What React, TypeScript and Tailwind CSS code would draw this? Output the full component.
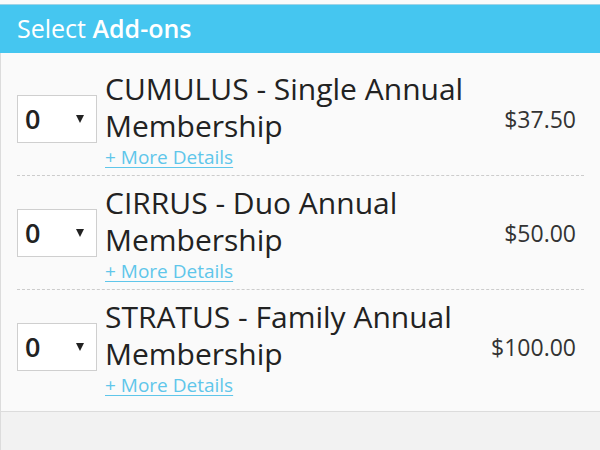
import React, { useState } from 'react';

interface AddOn {
  id: string;
  name: string;
  price: string;
}

const addOns: AddOn[] = [
  { id: 'cumulus', name: 'CUMULUS - Single Annual Membership', price: '$37.50' },
  { id: 'cirrus', name: 'CIRRUS - Duo Annual Membership', price: '$50.00' },
  { id: 'stratus', name: 'STRATUS - Family Annual Membership', price: '$100.00' },
];

const QtySelect: React.FC<{ value: number; onChange: (v: number) => void }> = ({ value, onChange }) => (
  <div className="relative w-[80px] h-[48px] shrink-0 bg-white border border-[#cfcfcf]">
    <select
      value={value}
      onChange={(e) => onChange(Number(e.target.value))}
      className="appearance-none w-full h-full bg-transparent pl-[7px] text-[27px] font-semibold text-[#222] outline-none"
    >
      {[0, 1, 2, 3, 4, 5].map((n) => (
        <option key={n} value={n}>{n}</option>
      ))}
    </select>
    <span className="pointer-events-none absolute right-[12px] top-[19px] w-0 h-0 border-l-[4px] border-r-[4px] border-t-[8px] border-l-transparent border-r-transparent border-t-[#222]"></span>
  </div>
);

export default function App() {
  const [qty, setQty] = useState<Record<string, number>>({});

  return (
    <div className="w-[600px] h-[450px] overflow-hidden bg-[#f2f2f2] font-['Open_Sans',sans-serif]">
      <div className="h-[5px] bg-[#fafafa] border-b border-[#9fd3e6]"></div>
      <div className="h-[48px] bg-[#45c6f0] flex items-center px-[17px] text-white text-[25px]">
        <span>Select&nbsp;</span>
        <span className="font-semibold">Add-ons</span>
      </div>

      <div className="bg-[#fafafa] border-l border-[#dcdcdc] border-b border-b-[#dcdcdc] pt-[9px] pb-[8px]">
        {addOns.map((a, i) => (
          <div
            key={a.id}
            className={`mx-[16px] flex items-center pt-[8px] pb-[7px] ${i < addOns.length - 1 ? 'border-b border-dashed border-[#cccccc]' : ''}`}
          >
            <QtySelect value={qty[a.id] ?? 0} onChange={(v) => setQty({ ...qty, [a.id]: v })} />
            <div className="flex-1 ml-[8px]">
              <div className="text-[30px] leading-[37px] text-[#222]">{a.name}</div>
              <a href="#" className="block mt-[2px] text-[19px] leading-[22px] text-[#5fc6ea] underline underline-offset-[3px]">
                + More Details
              </a>
            </div>
            <div className="w-[100px] text-right pr-[8px] text-[23px] text-[#333]">{a.price}</div>
          </div>
        ))}
      </div>
      <div className="h-full border-l border-[#dcdcdc]"></div>
    </div>
  );
}
